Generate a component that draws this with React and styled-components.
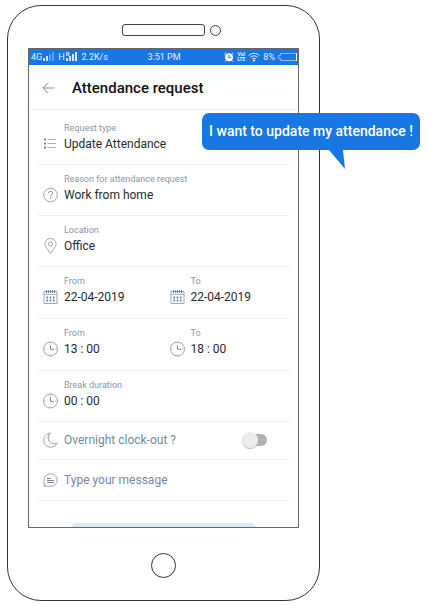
import React, { useState } from "react";
import styled, { createGlobalStyle } from "styled-components";

const App = () => {
  const [overnight, setOvernight] = useState(false);

  return (
    <>
      <GlobalStyle />
      <Page>
        <Phone>
          <PhoneTop>
            <Speaker />
            <Camera />
          </PhoneTop>

          <Screen>
            <StatusBar>
              <StatusGroup>
                <span>4G</span>
                <SignalIcon faded />
                <NetworkType>H</NetworkType>
                <Roaming>R</Roaming>
                <SignalIcon />
                <Speed>2.2K/s</Speed>
              </StatusGroup>
              <span>3:51 PM</span>
              <StatusGroup $end>
                <AlarmIcon />
                <Volte>
                  <span>VoI</span>
                  <span>LTE</span>
                </Volte>
                <WifiIcon />
                <span>8%</span>
                <BatteryIcon />
              </StatusGroup>
            </StatusBar>

            <Header>
              <BackButton type="button" aria-label="Back">
                <ArrowIcon />
              </BackButton>
              <h1>Attendance request</h1>
            </Header>

            <Form onSubmit={(e) => e.preventDefault()}>
              <Row>
                <Field id="type" label="Request type" icon={<ListIcon />}>
                  <Select id="type">
                    <option>Update Attendance</option>
                  </Select>
                </Field>
              </Row>
              <Row>
                <Field id="reason" label="Reason for attendance request" icon={<QuestionIcon />}>
                  <Input id="reason" defaultValue="Work from home" />
                </Field>
              </Row>
              <Row>
                <Field id="location" label="Location" icon={<PinIcon />}>
                  <Input id="location" defaultValue="Office" />
                </Field>
              </Row>
              <PairRow>
                <Field id="dateFrom" label="From" icon={<CalendarIcon />}>
                  <Input id="dateFrom" defaultValue="22-04-2019" />
                </Field>
                <Field id="dateTo" label="To" icon={<CalendarIcon />}>
                  <Input id="dateTo" defaultValue="22-04-2019" />
                </Field>
              </PairRow>
              <PairRow>
                <Field id="timeFrom" label="From" icon={<ClockIcon />}>
                  <Input id="timeFrom" defaultValue="13 : 00" />
                </Field>
                <Field id="timeTo" label="To" icon={<ClockIcon />}>
                  <Input id="timeTo" defaultValue="18 : 00" />
                </Field>
              </PairRow>
              <Row>
                <Field id="break" label="Break duration" icon={<ClockIcon />}>
                  <Input id="break" defaultValue="00 : 00" />
                </Field>
              </Row>
              <ToggleRow>
                <MoonIcon />
                <label htmlFor="overnight">Overnight clock-out ?</label>
                <Toggle
                  id="overnight"
                  type="checkbox"
                  checked={overnight}
                  onChange={(e) => setOvernight(e.target.checked)}
                />
              </ToggleRow>
              <MessageRow>
                <MessageIcon />
                <Input aria-label="Message" placeholder="Type your message" />
              </MessageRow>
              <SubmitArea>
                <SubmitButton type="submit" aria-label="Submit" />
              </SubmitArea>
            </Form>
          </Screen>

          <HomeButton type="button" aria-label="Home" />
          <Bubble>
            I want to update my attendance !
            <svg width="18" height="20" viewBox="0 0 18 20">
              <path d="M0 0H14L16 19Z" fill="#1877e2" />
            </svg>
          </Bubble>
        </Phone>
      </Page>
    </>
  );
};

const Field = ({ id, label, icon, children }) => (
  <FieldBox>
    {icon}
    <FieldText>
      <label htmlFor={id}>{label}</label>
      {children}
    </FieldText>
  </FieldBox>
);

const SignalIcon = ({ faded }) => (
  <svg width="12" height="10" viewBox="0 0 12 10" fill="#fff">
    <rect x="0" y="6" width="2" height="3" opacity="0.8" />
    <rect x="3" y="4" width="2" height="5" opacity="0.8" />
    <rect x="6" y="2" width="2" height="7" opacity={faded ? 0.3 : 0.8} />
    <rect x="9" y="0" width="2" height="9" opacity={faded ? 0.3 : 0.9} />
  </svg>
);

const AlarmIcon = () => (
  <svg width="10" height="10" viewBox="0 0 10 10" fill="none">
    <circle cx="5" cy="5.3" r="4" fill="#fff" />
    <path d="M.5 2.2 2.3.6M9.5 2.2 7.7.6M2.2 8.3l-1 1.2M7.8 8.3l1 1.2" stroke="#fff" />
    <path d="M4.8 2.8v2.9h2.1" stroke="#1877e2" />
  </svg>
);

const WifiIcon = () => (
  <svg width="12" height="10" viewBox="0 0 12 10" fill="none" stroke="#fff">
    <path d="M.6 3.6C3.6.6 8.4.6 11.4 3.6M2.4 5.4c2-2 5.2-2 7.2 0M4.2 7.2c1-1 2.6-1 3.6 0" opacity="0.9" />
    <circle cx="6" cy="8.6" r=".6" fill="#fff" />
  </svg>
);

const BatteryIcon = () => (
  <svg width="19" height="10" viewBox="0 0 19 10" fill="none" stroke="#8fbcf1">
    <path d="M18.5 1.5h-16v2H.5v3h2v2h16z" />
    <path d="M18.5 1v8" stroke="#fff" />
  </svg>
);

const ArrowIcon = () => (
  <svg width="13" height="12" viewBox="0 0 13 12" fill="none" stroke="#7d8da0">
    <path d="M12.5 6H1M6 .8.8 6 6 11.2" />
  </svg>
);

const LineIcon = ({ children }) => (
  <svg width="15" height="16" viewBox="0 0 15 16" fill="none" stroke="#8f9eb1" strokeWidth=".9">
    {children}
  </svg>
);

const ListIcon = () => (
  <LineIcon>
    <path d="M4.500 3.500H13M4.500 7.500H13M4.500 11.500H13" stroke="#9caabb" />
    <path d="M1 3.500h1.800M1 7.500h1.800M1 11.500h1.800" stroke="#66788f" strokeWidth="1.8" />
  </LineIcon>
);

const QuestionIcon = () => (
  <LineIcon>
    <circle cx="7.5" cy="8" r="6.8" />
    <path d="M5.4 6.4c0-1.3.9-2.1 2.1-2.1s2.1.8 2.1 1.9c0 1.6-2 1.6-2 3.3M7.6 10.6v1.2" stroke="#66788f" />
  </LineIcon>
);

const PinIcon = () => (
  <LineIcon>
    <path d="M7.5 15.5C5.5 12 1.9 9.1 1.9 5.8a5.6 5.3 0 0 1 11.2 0c0 3.3-3.6 6.2-5.6 9.7z" />
    <circle cx="7.5" cy="6" r="2" />
  </LineIcon>
);

const CalendarIcon = () => (
  <LineIcon>
    <path d="M1 2.5h13v12H1zM1 5.3h13" />
    <path d="M3.5 1v3M5.5 1v3M7.5 1v3M9.5 1v3M11.5 1v3" stroke="#66788f" />
    <path d="M3.5 8.5h8M3.5 11.5h8" stroke="#66788f" strokeWidth="1.8" strokeDasharray="1.6 1.6" />
  </LineIcon>
);

const ClockIcon = () => (
  <LineIcon>
    <circle cx="7.5" cy="8" r="7" />
    <path d="M7.5 4.2V8.3H11" stroke="#66788f" />
    <path d="M7.5 1.5v1M7.5 13.5v1M1.5 8h1M12.5 8h1" />
  </LineIcon>
);

const MoonIcon = () => (
  <LineIcon>
    <path d="M7.2.9C3 1.7.7 4.700.7 8.200c0 4 3 7 6.800 7 3 0 5.600-1.600 6.800-4.300-1.500.9-3 1.100-4.400.7C6.800 10.900 5 8.200 5 5.500 5 3.700 5.800 2 7.200.9z" />
    <path d="M7.2.9C5.300 3.200 5.200 6.700 6.500 9" opacity=".6" />
  </LineIcon>
);

const MessageIcon = () => (
  <LineIcon>
    <path d="M1 14.200V8a6.200 6.200 0 0 1 6.200-6.200H8A6.200 6.200 0 0 1 8 14.200z" />
    <path d="M4 6.500h4M4 8.500h7M4 10.500h7" stroke="#66788f" />
    <path d="M1 14.200l2-2" />
  </LineIcon>
);

const GlobalStyle = createGlobalStyle`
  * {
    box-sizing: border-box;
    margin: 0;
    padding: 0;
  }
  body {
    background: #fff;
    font-family: Roboto, "Liberation Sans", sans-serif;
  }
  svg {
    display: block;
    flex-shrink: 0;
  }
  button {
    border: 0;
    background: none;
    cursor: pointer;
  }
`;

const Page = styled.main`
  padding: 5px 7px;
`;

const Phone = styled.section`
  position: relative;
  display: flex;
  flex-direction: column;
  width: 100%;
  max-width: 313px;
  padding: 18px 20px 22px;
  border: 1px solid #333;
  border-radius: 34px;
`;

const PhoneTop = styled.div`
  display: grid;
  grid-template-columns: 1fr auto 1fr;
  align-items: center;
  column-gap: 5px;
  margin-bottom: 12px;
`;

const Speaker = styled.div`
  grid-column: 2;
  width: 83px;
  height: 12px;
  border: 1px solid #444;
  border-radius: 3px;
`;

const Camera = styled.div`
  width: 11px;
  height: 11px;
  border: 1px solid #444;
  border-radius: 50%;
`;

const Screen = styled.div`
  border: 1px solid #666;
  overflow: hidden;
`;

const StatusBar = styled.div`
  display: grid;
  grid-template-columns: 1fr auto 1fr;
  align-items: center;
  height: 16px;
  padding: 0 1px 0 2px;
  background: #1877e2;
  color: #e4effc;
  font-size: 9px;
  line-height: 16px;
`;

const StatusGroup = styled.div`
  display: flex;
  align-items: center;
  justify-content: ${({ $end }) => ($end ? "flex-end" : "flex-start")};
  gap: ${({ $end }) => ($end ? "3px" : "1px")};
`;

const NetworkType = styled.span`
  margin-left: 2px;
`;

const Roaming = styled.span`
  align-self: flex-start;
  margin-right: -4px;
  font-size: 6px;
  font-weight: 700;
  line-height: 9px;
`;

const Speed = styled.span`
  margin-left: 2px;
`;

const Volte = styled.span`
  display: grid;
  justify-items: center;
  font-size: 5px;
  font-weight: 700;
  line-height: 5px;
`;

const Header = styled.header`
  display: flex;
  align-items: center;
  gap: 17px;
  height: 45px;
  padding: 2px 0 0 13px;
  border-bottom: 1px solid #eee;
  h1 {
    color: #111;
    font-size: 15px;
    font-weight: 500;
    line-height: 20px;
  }
`;

const BackButton = styled.button`
  display: flex;
`;

const Form = styled.form`
  padding: 4px 8px 0;
`;

const Row = styled.div`
  padding: 8px 0 11px;
  border-bottom: 1px solid #f0f1f2;
`;

const PairRow = styled(Row)`
  display: grid;
  grid-template-columns: 1fr 1fr;
  padding-bottom: 12px;
`;

const FieldBox = styled.div`
  display: flex;
  align-items: flex-end;
  gap: 6px;
  padding-left: 6px;
  svg {
    margin-bottom: 1px;
  }
`;

const FieldText = styled.div`
  display: grid;
  flex: 1;
  min-width: 0;
  gap: 1px;
  label {
    color: #8797ab;
    font-size: 9px;
    line-height: 12px;
  }
`;

const Input = styled.input`
  width: 100%;
  min-width: 0;
  height: 18px;
  border: 0;
  outline: 0;
  background: none;
  color: #2a2a2a;
  font-family: inherit;
  font-size: 12px;
  line-height: 18px;
  &::placeholder {
    color: #78899e;
    opacity: 1;
  }
`;

const Select = styled(Input).attrs({ as: "select" })`
  appearance: none;
`;

const ToggleRow = styled.div`
  display: flex;
  align-items: center;
  gap: 6px;
  height: 38px;
  padding: 0 23px 2px 6px;
  border-bottom: 1px solid #f0f1f2;
  color: #78899e;
  font-size: 12px;
  line-height: 18px;
`;

const MessageRow = styled(ToggleRow)`
  height: 41px;
  padding-bottom: 0;
`;

const Toggle = styled.input`
  display: flex;
  align-items: center;
  appearance: none;
  width: 25px;
  height: 12px;
  margin-left: auto;
  border-radius: 6px;
  background: #b1b1b1;
  cursor: pointer;
  &::before {
    content: "";
    flex-shrink: 0;
    width: 16px;
    height: 16px;
    border-radius: 50%;
    background: #ebebeb;
    box-shadow: 0 1px 1px #bbb;
  }
  &:checked {
    justify-content: flex-end;
    background: #8fbdf1;
  }
`;

/* only the top edge of the button shows above the fold */
const SubmitArea = styled.div`
  height: 26px;
  padding-top: 22px;
  overflow: hidden;
`;

const SubmitButton = styled.button`
  display: block;
  width: 73%;
  height: 32px;
  margin: 0 auto;
  border-radius: 5px;
  background: #dce9f8;
`;

const HomeButton = styled.button`
  align-self: center;
  width: 25px;
  height: 25px;
  margin-top: 25px;
  border: 1px solid #333;
  border-radius: 50%;
`;

const Bubble = styled.div`
  position: absolute;
  top: 107px;
  right: -101px;
  width: 218px;
  padding: 9px 0 10px;
  border-radius: 7px;
  background: #1877e2;
  color: #fff;
  font-size: 14px;
  font-weight: 500;
  line-height: 18px;
  text-align: center;
  white-space: nowrap;
  svg {
    position: absolute;
    top: 100%;
    right: 73px;
  }
`;

export default App;
